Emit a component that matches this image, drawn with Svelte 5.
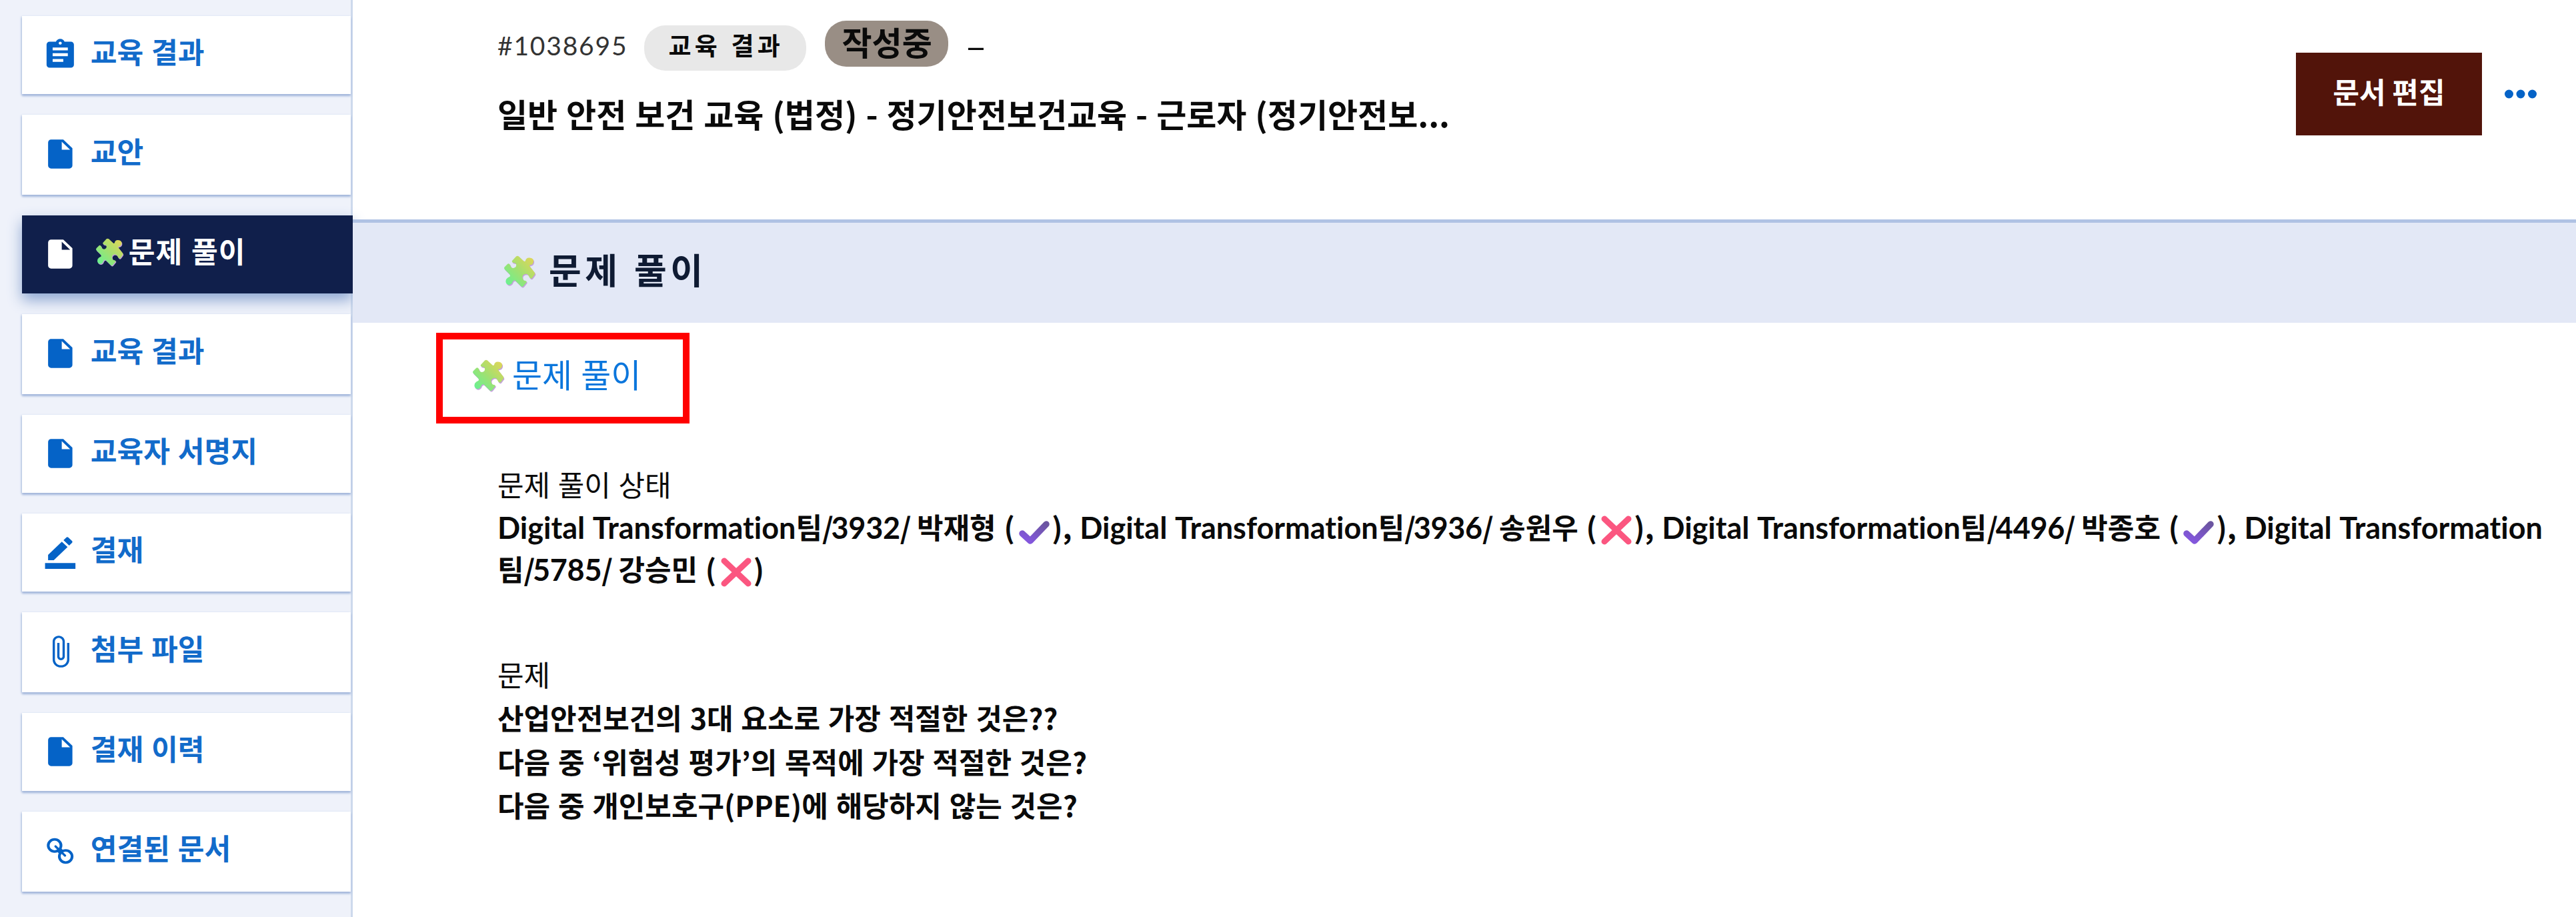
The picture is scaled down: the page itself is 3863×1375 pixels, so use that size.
<script>
  const paths = {
    clipboard: 'M19 3h-4.180C14.400 1.840 13.300 1 12 1c-1.300 0-2.400.84-2.820 2H5c-1.100 0-2 .9-2 2v14c0 1.100.9 2 2 2h14c1.100 0 2-.9 2-2V5c0-1.100-.9-2-2-2zm-7 0c.55 0 1 .45 1 1s-.45 1-1 1-1-.45-1-1 .45-1 1-1zm2 14H7v-2h7v2zm3-4H7v-2h10v2zm0-4H7V7h10v2z',
    file: 'M6 2c-1.100 0-1.990.9-1.990 2L4 20c0 1.100.89 2 1.990 2H18c1.100 0 2-.9 2-2V8l-6-6H6zm7 7V3.500L18.500 9H13z',
    pencil: 'M22 24H2v-4h20v4zM13.060 5.190l3.750 3.750L7.750 18H4v-3.750l9.060-9.060zm4.820 2.680l-3.750-3.750 1.830-1.830c.39-.39 1.020-.39 1.410 0l2.340 2.340c.39.39.39 1.020 0 1.410l-1.830 1.830z',
    clip: 'M16.500 6v11.500c0 2.210-1.790 4-4 4s-4-1.790-4-4V5c0-1.380 1.120-2.500 2.500-2.500s2.500 1.120 2.500 2.500v10.500c0 .55-.45 1-1 1s-1-.45-1-1V6H10v9.500c0 1.380 1.120 2.500 2.500 2.500s2.500-1.120 2.500-2.500V5c0-2.210-1.790-4-4-4S7 2.790 7 5v12.500c0 3.040 2.460 5.500 5.500 5.500s5.500-2.460 5.500-5.500V6h-1.500z'
  };

  const menu = [
    { icon: 'clipboard', label: '교육 결과' },
    { icon: 'file', label: '교안' },
    { icon: 'file', label: '문제 풀이', puzzle: true, active: true },
    { icon: 'file', label: '교육 결과' },
    { icon: 'file', label: '교육자 서명지' },
    { icon: 'pencil', label: '결재' },
    { icon: 'clip', label: '첨부 파일' },
    { icon: 'file', label: '결재 이력' },
    { icon: 'link', label: '연결된 문서' }
  ];

  const people = [
    { id: '3932', name: '박재형', passed: true },
    { id: '3936', name: '송원우', passed: false },
    { id: '4496', name: '박종호', passed: true },
    { id: '5785', name: '강승민', passed: false }
  ];

  const questions = [
    '산업안전보건의 3대 요소로 가장 적절한 것은??',
    '다음 중 ‘위험성 평가’의 목적에 가장 적절한 것은?',
    '다음 중 개인보호구(PPE)에 해당하지 않는 것은?'
  ];
</script>

{#snippet puzzle(id)}
  <svg class="puzzle" viewBox="0 0 48 48" aria-hidden="true">
    <defs>
      <linearGradient id={id} x1="0.1" y1="0.9" x2="0.9" y2="0.1">
        <stop offset="0" stop-color="#6cf090" />
        <stop offset="0.5" stop-color="#a2e070" />
        <stop offset="1" stop-color="#dcd65a" />
      </linearGradient>
      <path id="{id}-shape" d="M13 8 L19 1.500 Q21 0 23 1.500 L30 8 Q32 10 33 8 Q34 3 39 3.500 Q46 4 45 10 Q44 14 40 14.500 Q38 15 40 17 L47 26 Q48 28 46 30 L43 34 Q41 36 39 33 Q37 27 32 28 Q27 30 29 35 Q30 38 33 38 Q36 39 34 41 L30 46 Q28 48 26 46 L18 38 Q16 36 14 39 Q12 45 7 44 Q2 42 4 36 Q6 33 9 32 Q11 31 9 28 L2 21 Q0 19 2 17 L6 13 Q8 11 10 14 Q11 19 15 19 Q20 18 19 13 Q18 11 15 11 Q12 10 13 8 Z" />
    </defs>
    <use href="#{id}-shape" x="1" y="1.500" fill="#c4a0dc" />
    <use href="#{id}-shape" fill="url(#{id})" />
  </svg>
{/snippet}

<div class="page">
  <aside>
    {#each menu as item}
      <a class="item" class:active={item.active}>
        {#if item.icon === 'link'}
          <svg class="icon" viewBox="0 0 24 24" preserveAspectRatio="none" fill="none" stroke="currentColor" stroke-width="1.800">
            <circle cx="8.300" cy="8.200" r="4.200" />
            <circle cx="15.600" cy="15.800" r="4.200" />
            <path d="M8.900 8.800l6.200 6.400" stroke-linecap="round" stroke-width="1.500" />
            <path d="M10.800 10.800l2.300 2.400" stroke-width="3.600" />
          </svg>
        {:else}
          <svg class="icon {item.icon}" viewBox="0 0 24 24" preserveAspectRatio="none"><path fill="currentColor" d={paths[item.icon]} /></svg>
        {/if}
        {#if item.puzzle}{@render puzzle('menu-puzzle')}{/if}
        <span>{item.label}</span>
      </a>
    {/each}
  </aside>

  <main>
    <header>
      <div class="heading">
        <div class="meta">
          <span class="number">#1038695</span>
          <span class="type">교육 결과</span>
          <span class="state">작성중</span>
          <span class="dash">–</span>
        </div>
        <h1>일반 안전 보건 교육 (법정) - 정기안전보건교육 - 근로자 (정기안전보...</h1>
      </div>
      <button class="edit">문서 편집</button>
      <svg class="more" viewBox="0 0 48 14" aria-label="more"><circle cx="6.500" cy="7" r="6.500" /><circle cx="24" cy="7" r="6.500" /><circle cx="41.500" cy="7" r="6.500" /></svg>
    </header>

    <h2>{@render puzzle('band-puzzle')}<span>문제 풀이</span></h2>

    <a class="launch">{@render puzzle('launch-puzzle')}<span>문제 풀이</span></a>

    <section class="status">
      <h3>문제 풀이 상태</h3>
      <p>{#each people as person, i}<span class="latin">Digital Transformation</span><wbr />팀<span class="slash">/</span><span class="latin digits">{person.id}</span><span class="slash">/</span> {person.name} ({#if person.passed}<svg class="check" viewBox="0 0 46 36"><defs><linearGradient id="check-{i}" x1="1" y1="0" x2="0.3" y2="1"><stop offset="0" stop-color="#6b55a0" /><stop offset="1" stop-color="#8357dc" /></linearGradient></defs><path d="M5 19 L17 30 L41 5" fill="none" stroke="url(#check-{i})" stroke-width="9.500" stroke-linecap="round" stroke-linejoin="round" /></svg>{:else}<svg class="cross" viewBox="0 0 46 44"><path d="M5 5 L41 39 M41 5 L5 39" stroke="#fb5680" stroke-width="9" stroke-linecap="round" /></svg>{/if}){i < people.length - 1 ? ', ' : ''}{/each}</p>
    </section>

    <section class="questions">
      <h3>문제</h3>
      {#each questions as question}
        <p>{question}</p>
      {/each}
    </section>
  </main>
</div>

<style>
  :global(body) {
    margin: 0;
    background: #fff;
  }
  .page {
    display: flex;
    width: 3863px;
    height: 1375px;
    overflow: hidden;
    font-family: 'Noto Sans CJK KR', sans-serif;
    font-size: 43px;
    word-spacing: 2px;
    color: #0a0a0a;
  }
  aside {
    box-sizing: border-box;
    width: 529px;
    flex: none;
    padding: 24px 0 0 33px;
    display: grid;
    grid-template-rows: 117px 120px 117px 120px 117px 117px 120px 117px 120px;
    row-gap: 31px;
    background: #eff2fa;
    border-right: 3px solid #cdd9ec;
  }
  .item {
    display: flex;
    align-items: center;
    box-sizing: border-box;
    padding: 0 0 4px 30px;
    background: #fff;
    color: #0563c7;
    font-weight: 700;
    font-size: 43.200px;
    line-height: 60px;
    box-shadow: 0 3px 3px #a4b8dc, -1px 1px 3px #b9c9e4;
  }
  .item span {
    margin-top: -10px;
    color: #126bca;
  }
  .active {
    margin-right: -3px;
    background: #101f4b;
    color: #fff;
    box-shadow: 0 10px 20px #8ea7d2;
  }
  .active span {
    color: #fff;
    letter-spacing: 1px;
  }
  .icon {
    width: 54.700px;
    height: 52px;
    flex: none;
    margin: 2px 18px 0 0;
  }
  .pencil {
    margin-top: 0;
  }
  .puzzle {
    width: 48px;
    height: 50px;
    flex: none;
    overflow: visible;
  }
  .active .puzzle {
    width: 42px;
    height: 44px;
    margin: -4px 8px 0 7px;
  }

  main {
    flex: 1;
    min-width: 0;
  }
  header {
    box-sizing: border-box;
    height: 334px;
    display: flex;
    padding-left: 217px;
    border-bottom: 5px solid #b0c2e4;
  }
  .heading {
    width: 2697px;
    flex: none;
  }
  .meta {
    display: flex;
    align-items: flex-start;
    height: 135px;
  }
  .number {
    width: 219.500px;
    padding-top: 38px;
    font-family: Lato, sans-serif;
    font-size: 39px;
    letter-spacing: 1.800px;
    line-height: 60px;
    color: #333;
  }
  .type {
    box-sizing: border-box;
    width: 243px;
    height: 68px;
    margin-top: 38px;
    padding-left: 37px;
    border-radius: 32px;
    background: #e8e8e8;
    font-weight: 700;
    font-size: 37px;
    letter-spacing: 5.200px;
    line-height: 58px;
  }
  .state {
    box-sizing: border-box;
    width: 185px;
    height: 69px;
    margin: 31px 0 0 28px;
    padding-left: 26px;
    border-radius: 32px;
    background: #998e85;
    font-weight: 700;
    font-size: 49px;
    line-height: 61px;
  }
  .dash {
    margin-left: 28px;
    padding-top: 36px;
    font-size: 52px;
    line-height: 60px;
  }
  h1 {
    margin: 0;
    font-size: 49px;
    font-weight: 700;
    line-height: 70px;
    word-spacing: 1.800px;
    white-space: nowrap;
  }
  .edit {
    width: 279px;
    height: 124px;
    margin: 79px 0 0;
    padding: 0 0 10px;
    border: 0;
    background: #52140a;
    color: #fff;
    font: 700 43px 'Noto Sans CJK KR', sans-serif;
  }
  .more {
    width: 48px;
    height: 14px;
    margin: 134px 0 0 34px;
    fill: #0563c7;
  }

  h2 {
    box-sizing: border-box;
    height: 150px;
    margin: 0;
    padding: 0 0 6px 226px;
    display: flex;
    align-items: center;
    gap: 20px;
    background: #e3e8f6;
    color: #0f1b33;
    font-size: 53px;
    font-weight: 700;
    letter-spacing: 5.500px;
  }
  h2 span {
    margin-top: -6px;
  }
  h2 .puzzle {
    margin-top: 2px;
  }
  .launch {
    box-sizing: border-box;
    width: 380px;
    height: 136px;
    margin: 15px 0 0 125px;
    padding: 0 0 8px 44px;
    display: flex;
    align-items: center;
    gap: 12px;
    border: 10px solid #f00;
    color: #0b76dc;
    font-size: 49px;
  }
  .launch span {
    margin-top: -8px;
  }

  section {
    padding-left: 217px;
  }
  h3 {
    margin: 0;
    font-size: 43px;
    font-weight: 400;
    line-height: 65px;
  }
  p {
    margin: 0;
    font-weight: 700;
    white-space: nowrap;
  }
  .status {
    margin-top: 58px;
  }
  .status p {
    width: 3100px;
    white-space: normal;
    line-height: 62.500px;
  }
  .questions {
    margin-top: 95px;
  }
  .questions p {
    line-height: 65.500px;
  }
  .latin {
    font-family: Lato, sans-serif;
    font-size: 45px;
    font-variant-ligatures: none;
    line-height: 50px;
  }
  .digits {
    letter-spacing: -0.300px;
  }
  .slash {
    letter-spacing: -3.200px;
  }
  .check,
  .cross {
    width: 46px;
    height: 36px;
    margin: 0 3px -9px 6.500px;
  }
  .cross {
    height: 44px;
  }
</style>
